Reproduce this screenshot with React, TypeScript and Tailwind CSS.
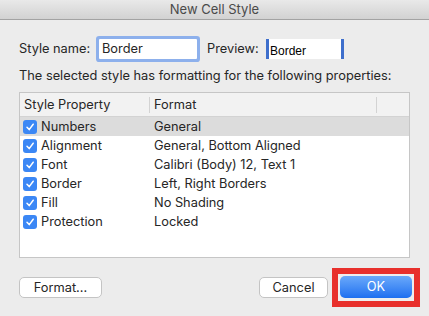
import React from "react";

const rows: [string, string][] = [
  ["Numbers", "General"],
  ["Alignment", "General, Bottom Aligned"],
  ["Font", "Calibri (Body) 12, Text 1"],
  ["Border", "Left, Right Borders"],
  ["Fill", "No Shading"],
  ["Protection", "Locked"],
];

function Check() {
  return (
    <div className="w-[14px] h-[14px] rounded-[3px] bg-[#3b87f5] flex items-center justify-center shrink-0">
      <svg width="10" height="10" viewBox="0 0 10 10">
        <path d="M2 5.2 L4.2 7.6 L8.2 2.2" fill="none" stroke="white" strokeWidth="1.5" strokeLinecap="round" strokeLinejoin="round" />
      </svg>
    </div>
  );
}

export default function App() {
  return (
    <div
      className="w-[429px] h-[316px] bg-[#ececec] text-[#262626] text-[12.8px] overflow-hidden"
      style={{ fontFamily: 'Inter, "Liberation Sans", Arial, sans-serif' }}
    >
      <div className="h-[20px] bg-gradient-to-b from-[#e9e9e9] to-[#d2d2d2] border-b border-[#a3a3a3] flex items-center justify-center text-[#4a4a4a] text-[13px] leading-none">
        New Cell Style
      </div>

      <div className="mt-[19px] flex items-center h-[20px] pl-[19px]">
        <div className="w-[80px] leading-[20px]">Style name:</div>
        <div className="w-[98px] h-[20px] bg-white ring-[3px] ring-[#8db0ec] rounded-[1px] flex items-center pl-[3px]">
          Border
        </div>
        <div className="ml-[10px] w-[59px] leading-[20px]">Preview:</div>
        <div
          className="w-[78px] h-[20px] bg-white border-l-[3px] border-r-[3px] border-[#3e6fcc] flex items-end pl-[1px] pb-[1px] text-[12px] leading-[14px] text-black"
          style={{ fontFamily: '"Liberation Sans", Arial, sans-serif' }}
        >
          Border
        </div>
      </div>

      <div className="mt-[9px] pl-[19px] leading-[16px]">
        The selected style has formatting for the following properties:
      </div>

      <div className="mt-[8px] ml-[19px] w-[391px] h-[166px] border border-[#c6c6c6] bg-white flex flex-col">
        <div className="h-[24px] bg-[#f2f2f2] border-b border-[#d3d3d3] flex items-center shrink-0">
          <div className="w-[130px] pl-[4px] border-r border-[#d3d3d3] h-[16px] leading-[16px]">Style Property</div>
          <div className="w-[227px] pl-[4px] border-r border-[#d3d3d3] h-[16px] leading-[16px]">Format</div>
        </div>
        {rows.map(([p, f], i) => (
          <div key={p} className={`h-[19px] flex items-center shrink-0 ${i === 0 ? "bg-[#dcdcdc]" : ""}`}>
            <div className="w-[130px] pl-[3px] flex items-center gap-[4px]">
              <Check />
              <span>{p}</span>
            </div>
            <div className="pl-[4px]">{f}</div>
          </div>
        ))}
      </div>

      <div className="mt-[10px] flex items-center pl-[19px]">
        <div className="w-[83px] h-[21px] bg-white border border-[#c4c4c4] rounded-[5px] flex items-center justify-center">
          Format...
        </div>
        <div className="ml-[157px] w-[69px] h-[21px] bg-white border border-[#c4c4c4] rounded-[5px] flex items-center justify-center">
          Cancel
        </div>
        <div className="ml-[4px] w-[88px] h-[39px] border-[6px] border-[#e8302c] bg-[#eeeeee] pt-[2px] pl-[2px]">
          <div className="w-[72px] h-[22px] rounded-[5px] bg-gradient-to-b from-[#6aa9fa] to-[#1d6ff0] text-white flex items-center justify-center">
            OK
          </div>
        </div>
      </div>
    </div>
  );
}
